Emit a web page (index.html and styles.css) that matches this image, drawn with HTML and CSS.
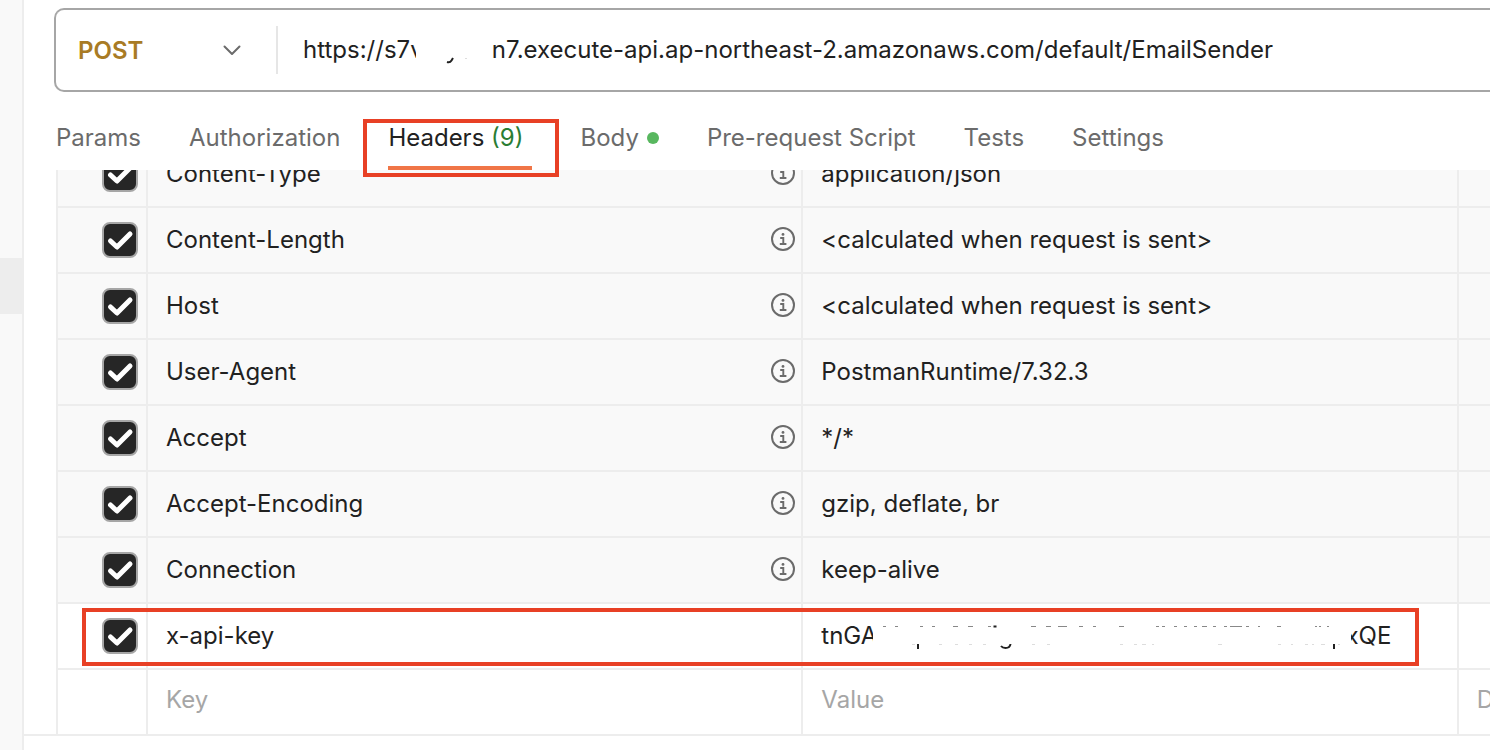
FILE: index.html
```html
<!DOCTYPE html>
<html lang="en">
<head>
<meta charset="utf-8">
<title>EmailSender</title>
<link rel="stylesheet" href="styles.css">
</head>
<body>
<svg class="defs" aria-hidden="true">
  <symbol id="info" viewBox="0 0 24 24">
    <circle cx="12" cy="12" r="11" fill="none" stroke="currentColor" stroke-width="2"/>
    <circle cx="12" cy="7.4" r="1.4" fill="currentColor"/>
    <path d="M9.2 11H12.3V17M8.8 17H15.4" fill="none" stroke="currentColor" stroke-width="1.9"/>
  </symbol>
</svg>
<div class="app">
  <aside class="sidebar"><div class="sidebar-item"></div></aside>
  <main class="main">
    <form class="request">
      <div class="method">
        <select class="method-select" aria-label="Method"><option>POST</option></select>
        <svg class="chevron" viewBox="0 0 18 11" aria-hidden="true"><path d="M1.5 1.5L9 9L16.5 1.5" fill="none" stroke="#6b6b6b" stroke-width="2" stroke-linecap="round" stroke-linejoin="round"/></svg>
      </div>
      <div class="url">
        <input class="url-input" type="text" aria-label="Request URL" value="https://s7v&#8195;&#8195;   n7.execute-api.ap-northeast-2.amazonaws.com/default/EmailSender">
        <svg class="url-mask" viewBox="0 0 74 36" aria-hidden="true"><path d="M0 0H74V36H0Z" fill="#fff"/><path d="M31 30Q34 31 35.500 28.500L37 26" fill="none" stroke="#212121" stroke-width="2"/><path d="M49 26.500H51" stroke="#ddd"/></svg>
      </div>
    </form>
    <nav class="tabs">
      <a class="tab" href="#params">Params</a>
      <a class="tab" href="#authorization">Authorization</a>
      <a class="tab active" href="#headers">Headers <span class="count">(9)</span><span class="mark tab-mark"></span></a>
      <a class="tab" href="#body">Body<span class="dot"></span></a>
      <a class="tab" href="#pre-request">Pre-request Script</a>
      <a class="tab" href="#tests">Tests</a>
      <a class="tab" href="#settings">Settings</a>
    </nav>
    <div class="scroller">
      <table class="headers">
        <colgroup><col class="col-check"><col class="col-key"><col class="col-value"><col></colgroup>
        <tbody>
          <tr class="auto"><td class="check"><input type="checkbox" checked aria-label="Content-Type"></td><td><div class="key">Content-Type<svg class="info"><use href="#info"/></svg></div></td><td>application/json</td><td></td></tr>
          <tr class="auto"><td class="check"><input type="checkbox" checked aria-label="Content-Length"></td><td><div class="key">Content-Length<svg class="info"><use href="#info"/></svg></div></td><td>&lt;calculated when request is sent&gt;</td><td></td></tr>
          <tr class="auto"><td class="check"><input type="checkbox" checked aria-label="Host"></td><td><div class="key">Host<svg class="info"><use href="#info"/></svg></div></td><td>&lt;calculated when request is sent&gt;</td><td></td></tr>
          <tr class="auto"><td class="check"><input type="checkbox" checked aria-label="User-Agent"></td><td><div class="key">User-Agent<svg class="info"><use href="#info"/></svg></div></td><td>PostmanRuntime/7.32.3</td><td></td></tr>
          <tr class="auto"><td class="check"><input type="checkbox" checked aria-label="Accept"></td><td><div class="key">Accept<svg class="info"><use href="#info"/></svg></div></td><td>*/*</td><td></td></tr>
          <tr class="auto"><td class="check"><input type="checkbox" checked aria-label="Accept-Encoding"></td><td><div class="key">Accept-Encoding<svg class="info"><use href="#info"/></svg></div></td><td>gzip, deflate, br</td><td></td></tr>
          <tr class="auto"><td class="check"><input type="checkbox" checked aria-label="Connection"></td><td><div class="key">Connection<svg class="info"><use href="#info"/></svg></div></td><td>keep-alive</td><td></td></tr>
          <tr class="custom"><td class="check"><input type="checkbox" checked aria-label="x-api-key"></td><td>x-api-key</td><td>
            <div class="secret"><span class="secret-start">tnGA</span>
              <svg class="secret-mask" viewBox="0 0 478 32" aria-hidden="true">
                <path d="M10 6.5h3M22 6.5h3M47 6.5h3M59 6.5h3M80 6.5h5M95 6.5h5M115 6.5h3M158 6.5h5M173 6.5h5M185 6.5h9M206 6.5h4M220 6.5h3M246 6.5h5M283 6.5h3M289 6.5h3M301 6.5h3M311 6.5h3M321 6.5h3M329 6.5h5M340 6.5h3M351 6.5h3M357 6.5h12M373 6.5h3M385 6.5h2M404 6.5h4M442 6.5h2M446 6.5h2M454 6.5h2" stroke="#888" fill="none"/>
                <path d="M39 24.5h3M66 24.5h3M82 24.5h3M96 24.5h3M110 24.5h3M159 24.5h3M174 24.5h3M247 24.5h3M261 24.5h3M269 24.5h4M279 24.5h2M345 24.5h4M405 24.5h3M418 24.5h2M432 24.5h3M439 24.5h2M448 24.5h4M465 24.5h2" stroke="#ddd" fill="none"/>
                <path d="M45 24v5M461 24v5M120.500 6.500h3" stroke="#212121" stroke-width="2" fill="none"/>
                <path d="M128 26Q129.500 28 132.500 28Q137 28 137.500 24" stroke="#212121" stroke-width="2" fill="none"/>
              </svg>
              <span class="secret-end">xQE</span></div>
          </td><td><span class="mark row-mark"></span></td></tr>
          <tr class="blank"><td></td><td><input class="field" type="text" placeholder="Key" aria-label="Key"></td><td><input class="field" type="text" placeholder="Value" aria-label="Value"></td><td><input class="field" type="text" placeholder="Description" aria-label="Description"></td></tr>
        </tbody>
      </table>
    </div>
  </main>
</div>
</body>
</html>
```
FILE: styles.css
```css
* { box-sizing: border-box; }

body {
  margin: 0;
  font-family: Inter, "Liberation Sans", sans-serif;
  font-size: 24px;
  line-height: 32px;
  color: #212121;
  background: #fff;
  overflow: hidden;
}

input, select { font: inherit; color: inherit; border: 0; background: none; padding: 0; margin: 0; outline: 0; }

.defs { position: absolute; width: 0; height: 0; }

.app { display: flex; min-height: 100vh; }

.sidebar { flex: 0 0 24px; padding-top: 258px; background: #f9f9f9; border-right: 2px solid #ededed; }
.sidebar-item { height: 56px; background: #ededed; }

.main { flex: 1; min-width: 0; padding-top: 8px; }

.request {
  display: flex;
  align-items: center;
  height: 84px;
  margin-left: 30px;
  border: 2px solid #a6a6a6;
  border-right: 0;
  border-radius: 10px 0 0 10px;
}

.method { display: grid; align-items: center; width: 222px; height: 48px; border-right: 2px solid #e6e6e6; }
.method > * { grid-area: 1 / 1; }
.method-select { appearance: none; width: 100%; height: 48px; padding-top: 2px; padding-left: 22px; font-weight: 600; color: #a87b25; }
.chevron { justify-self: end; width: 18px; height: 11px; margin-right: 35px; pointer-events: none; }

.url { position: relative; flex: 1; padding-left: 25px; }
.url-input { display: block; width: 100%; height: 36px; padding-bottom: 2px; }
.url-mask { position: absolute; left: 138px; top: 0; width: 74px; height: 36px; }

.tabs { display: flex; gap: 48px; height: 78px; padding-left: 32px; }
.tab { position: relative; display: flex; align-items: center; height: 78px; padding: 18px 0 4px; color: #6b6b6b; text-decoration: none; white-space: pre; }
.tab.active { padding-right: 9px; padding-bottom: 0; border-bottom: 4px solid #f07547; color: #212121; }
.count { color: #2a7d33; }
.dot { width: 12px; height: 12px; margin-left: 8px; border-radius: 50%; background: #58b75f; }

.mark { position: absolute; z-index: 2; border: 4px solid #e84025; pointer-events: none; }
.tab-mark { left: -25px; right: -27px; top: 27px; bottom: -11px; }
.row-mark { left: 26px; right: 71px; top: 4px; bottom: 4px; }

.scroller { overflow: hidden; border-bottom: 2px solid #ededed; padding-left: 32px; }

.headers { width: 100%; margin-top: -28px; table-layout: fixed; border-collapse: separate; border-spacing: 0; }
.col-check { width: 90px; }
.col-key, .col-value { width: 45.7%; }

.headers td { height: 66px; padding: 0 0 0 18px; border-left: 2px solid #ededed; border-bottom: 2px solid #ededed; white-space: nowrap; overflow: hidden; }
.headers tr { position: relative; }
.auto td { background: #f9f9f9; }
.headers .blank td { height: 64px; border-bottom: 0; padding-bottom: 6px; }
.headers .check { padding-left: 44px; }

.check input {
  display: block;
  appearance: none;
  width: 36px;
  height: 36px;
  border: 2px solid #a6a6a6;
  border-radius: 8px;
  background: #262626 url("data:image/svg+xml,%3Csvg xmlns='http://www.w3.org/2000/svg' viewBox='0 0 32 32'%3E%3Cpath d='M6.500 17L13 23L26 10' fill='none' stroke='white' stroke-width='5' stroke-linecap='round' stroke-linejoin='round'/%3E%3C/svg%3E") center / 100%;
}

.key { display: flex; align-items: center; justify-content: space-between; padding-right: 6px; }
.info { width: 24px; height: 26px; padding-bottom: 2px; color: #6b6b6b; }

.secret { display: flex; align-items: center; }
.secret-start { width: 52px; overflow: hidden; }
.secret-mask { width: 478px; height: 32px; }
.secret-end { display: flex; justify-content: flex-end; width: 40px; overflow: hidden; }

.field { display: block; width: 100%; height: 36px; }
.field::placeholder { color: #a6a6a6; opacity: 1; }
```
